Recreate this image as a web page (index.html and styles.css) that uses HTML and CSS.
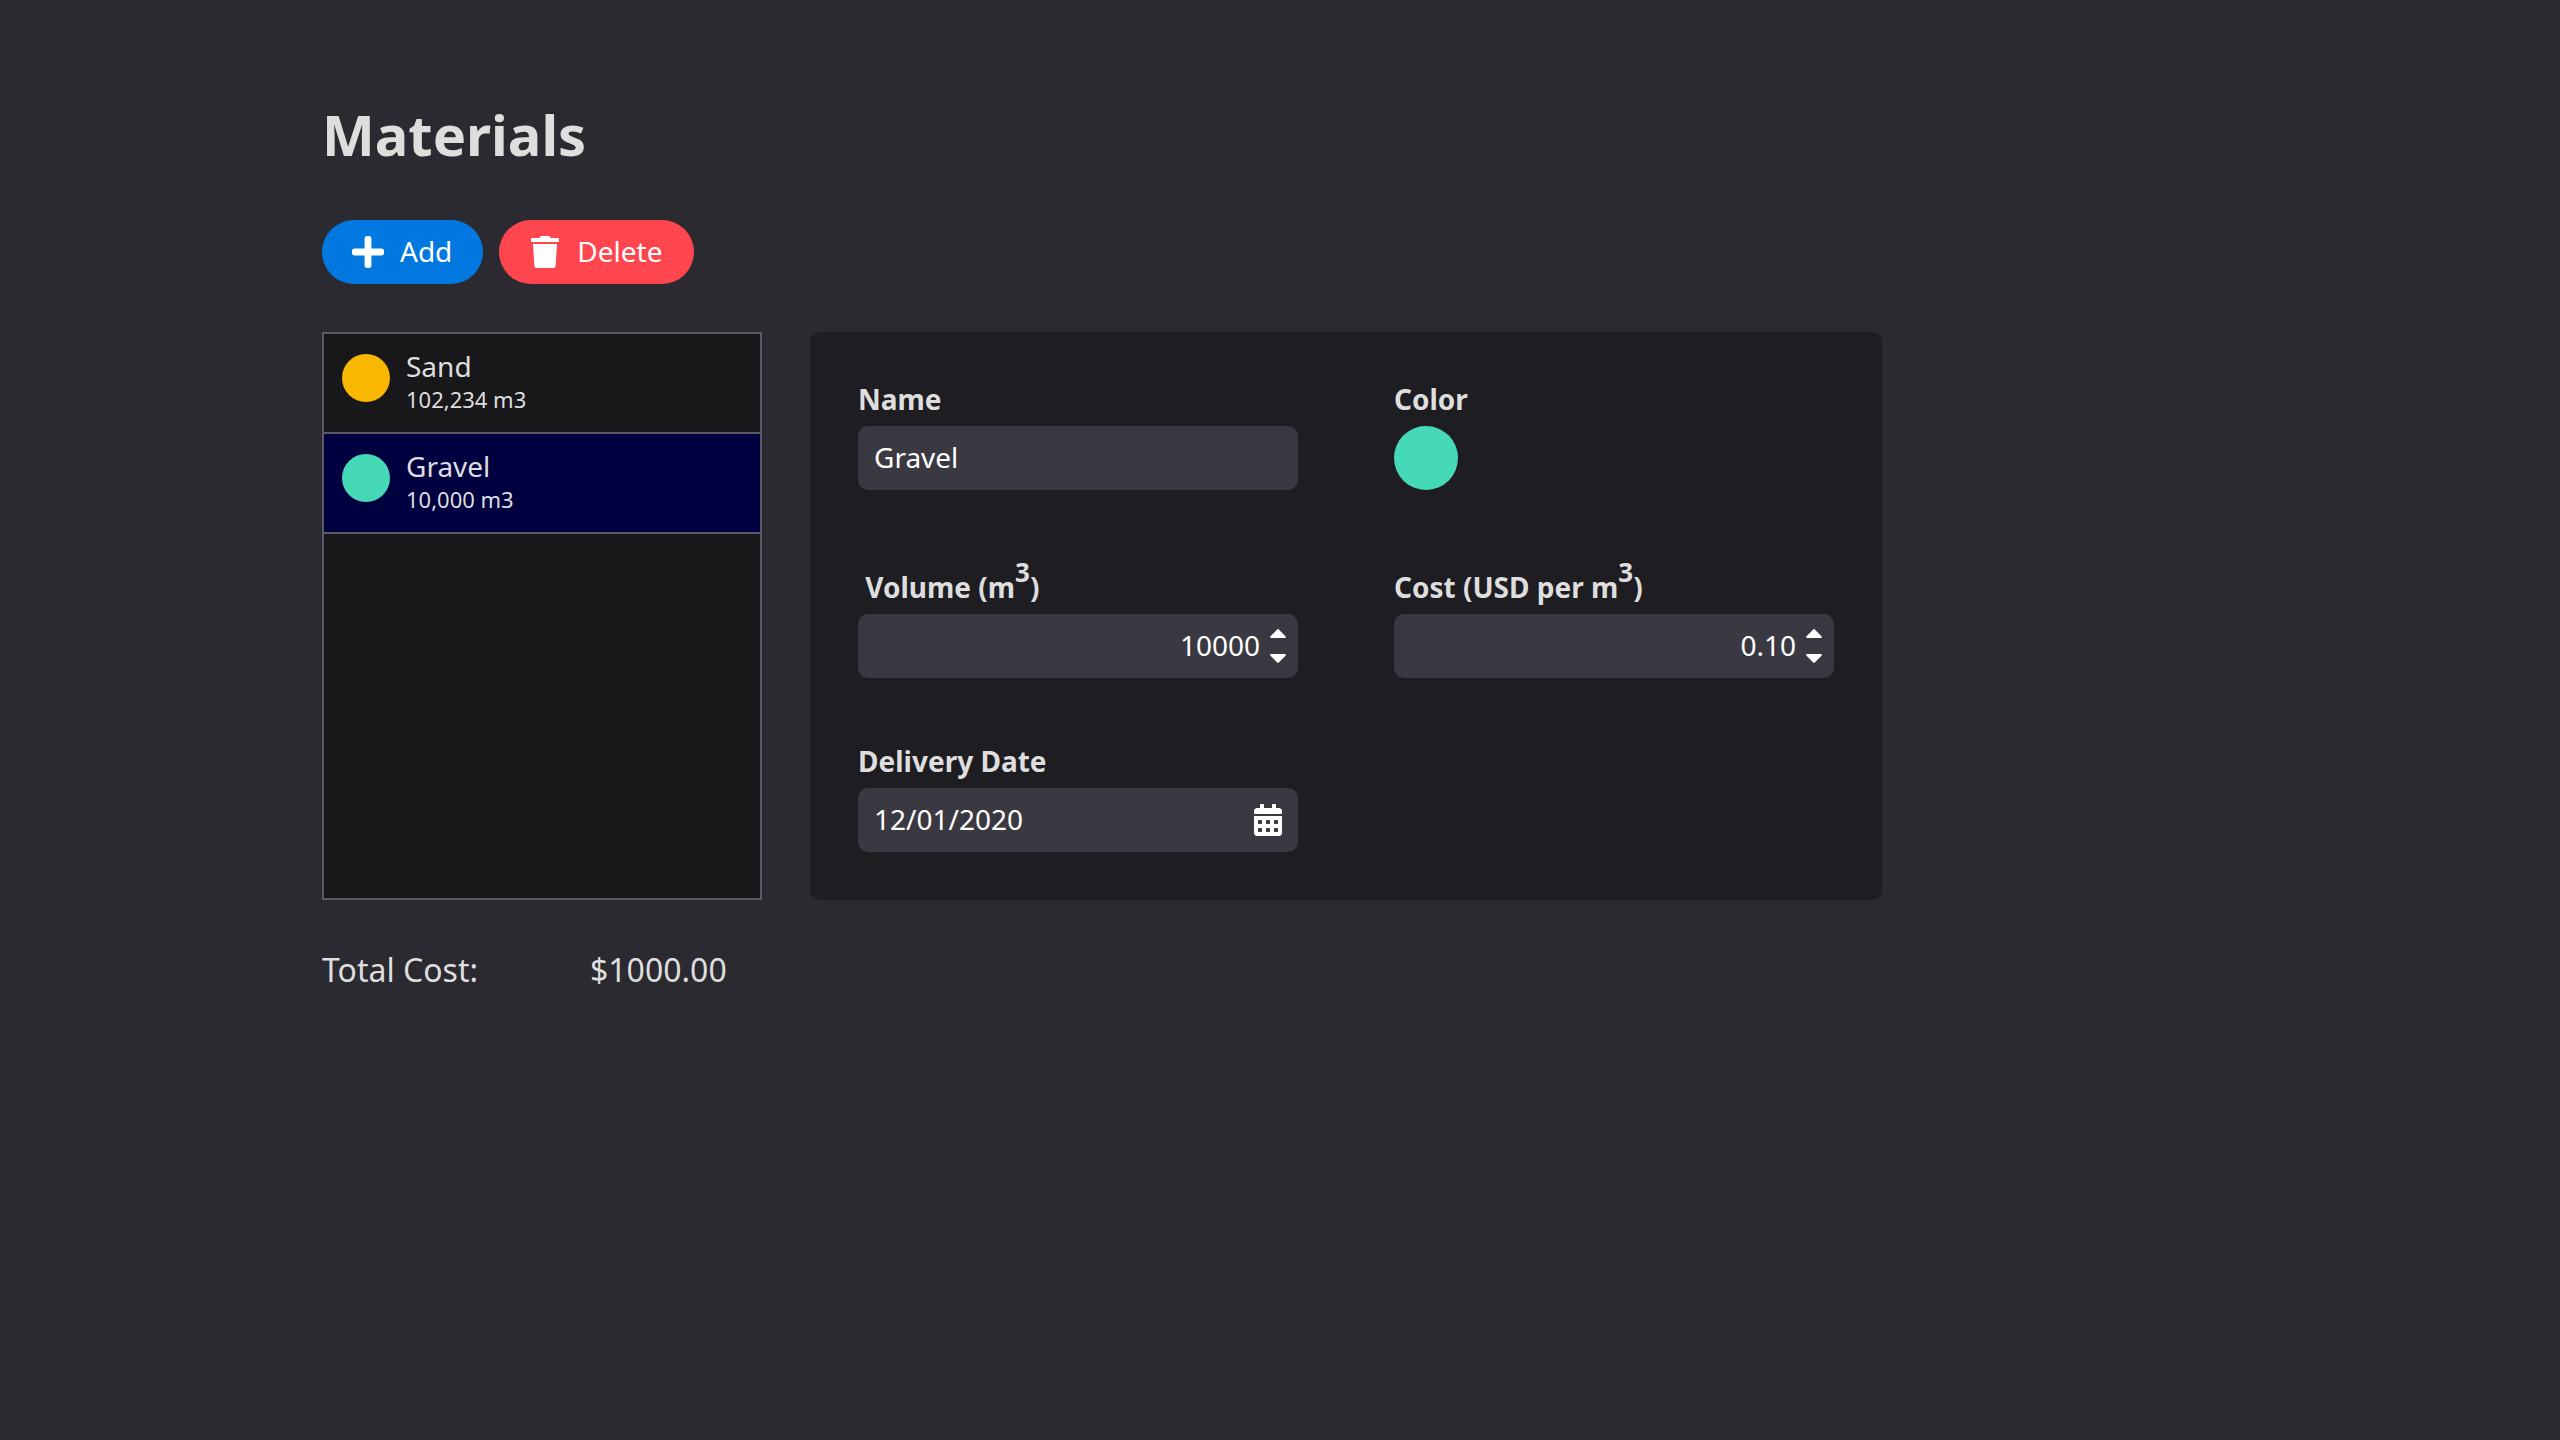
FILE: index.html
```html
<!DOCTYPE html>
<html lang="en">
<head>
<meta charset="utf-8">
<meta name="viewport" content="width=device-width, initial-scale=1">
<title>Materials</title>
<link rel="stylesheet" href="styles.css">
</head>
<body>
<main class="page">
  <h1 class="title">Materials</h1>

  <div class="toolbar">
    <button type="button" class="btn btn-add">
      <span class="btn-icon"><svg width="32" height="32" viewBox="0 32 448 448" aria-hidden="true"><path fill="currentColor" d="M416 208H272V64c0-17.67-14.33-32-32-32h-32c-17.67 0-32 14.33-32 32v144H32c-17.67 0-32 14.33-32 32v32c0 17.67 14.33 32 32 32h144v144c0 17.67 14.33 32 32 32h32c17.67 0 32-14.33 32-32V304h144c17.67 0 32-14.33 32-32v-32c0-17.67-14.33-32-32-32z"/></svg></span>
      <span class="btn-text">Add</span>
    </button>
    <button type="button" class="btn btn-delete">
      <span class="btn-icon"><svg width="28" height="32" viewBox="0 0 448 512" aria-hidden="true"><path fill="currentColor" d="M432 32H312l-9.400-18.700A24 24 0 0 0 281.100 0H166.800a23.720 23.720 0 0 0-21.400 13.300L136 32H16A16 16 0 0 0 0 48v32a16 16 0 0 0 16 16h416a16 16 0 0 0 16-16V48a16 16 0 0 0-16-16zM32 128l21.200 339a48 48 0 0 0 47.900 45h245.800a48 48 0 0 0 47.900-45L416 128z"/></svg></span>
      <span class="btn-text">Delete</span>
    </button>
  </div>

  <div class="workspace">
    <ul class="materials">
      <li class="material">
        <span class="swatch swatch-sand"></span>
        <div>
          <div class="material-name">Sand</div>
          <div class="material-volume">102,234 m3</div>
        </div>
      </li>
      <li class="material material-selected">
        <span class="swatch swatch-gravel"></span>
        <div>
          <div class="material-name">Gravel</div>
          <div class="material-volume">10,000 m3</div>
        </div>
      </li>
    </ul>

    <form class="details">
      <div class="field">
        <label class="label" for="name">Name</label>
        <div class="control"><input class="input" id="name" type="text" value="Gravel"></div>
      </div>
      <div class="field">
        <label class="label" for="color">Color</label>
        <input class="color" id="color" type="color" value="#45d9b8">
      </div>
      <div class="field">
        <label class="label" for="volume">&nbsp;Volume (m<sup>3</sup>)</label>
        <div class="control">
          <input class="input input-number" id="volume" type="number" value="10000">
          <div class="spinner">
            <button type="button" class="step" aria-label="Increase volume"><svg width="16" height="9" viewBox="0 0 16 9"><path fill="currentColor" d="M7.200.4q.8-.7 1.600 0L15.700 7.500q.6.900-.5 1.500H.8Q-.3 8.400.3 7.500z"/></svg></button>
            <button type="button" class="step" aria-label="Decrease volume"><svg width="16" height="9" viewBox="0 0 16 9"><path fill="currentColor" d="M7.200 8.600q.8.700 1.600 0L15.700 1.500q.6-.9-.5-1.500H.8Q-.3.6.3 1.500z"/></svg></button>
          </div>
        </div>
      </div>
      <div class="field">
        <label class="label" for="cost">Cost (USD per m<sup>3</sup>)</label>
        <div class="control">
          <input class="input input-number" id="cost" type="number" step="0.01" value="0.10">
          <div class="spinner">
            <button type="button" class="step" aria-label="Increase cost"><svg width="16" height="9" viewBox="0 0 16 9"><path fill="currentColor" d="M7.200.4q.8-.7 1.600 0L15.700 7.500q.6.900-.5 1.500H.8Q-.3 8.400.3 7.500z"/></svg></button>
            <button type="button" class="step" aria-label="Decrease cost"><svg width="16" height="9" viewBox="0 0 16 9"><path fill="currentColor" d="M7.200 8.600q.8.700 1.600 0L15.700 1.500q.6-.9-.5-1.500H.8Q-.3.6.3 1.500z"/></svg></button>
          </div>
        </div>
      </div>
      <div class="field">
        <label class="label" for="date">Delivery Date</label>
        <div class="control">
          <input class="input" id="date" type="text" value="12/01/2020">
          <button type="button" class="calendar" aria-label="Choose date"><svg width="28" height="32" viewBox="0 0 448 512"><path fill="currentColor" d="M0 464c0 26.500 21.500 48 48 48h352c26.500 0 48-21.500 48-48V192H0v272zm320-196c0-6.600 5.400-12 12-12h40c6.600 0 12 5.400 12 12v40c0 6.600-5.400 12-12 12h-40c-6.600 0-12-5.400-12-12v-40zm0 128c0-6.600 5.400-12 12-12h40c6.600 0 12 5.400 12 12v40c0 6.600-5.400 12-12 12h-40c-6.600 0-12-5.400-12-12v-40zM192 268c0-6.600 5.400-12 12-12h40c6.600 0 12 5.400 12 12v40c0 6.600-5.400 12-12 12h-40c-6.600 0-12-5.400-12-12v-40zm0 128c0-6.600 5.400-12 12-12h40c6.600 0 12 5.400 12 12v40c0 6.600-5.400 12-12 12h-40c-6.600 0-12-5.400-12-12v-40zM64 268c0-6.600 5.400-12 12-12h40c6.600 0 12 5.400 12 12v40c0 6.600-5.400 12-12 12H76c-6.600 0-12-5.400-12-12v-40zm0 128c0-6.600 5.400-12 12-12h40c6.600 0 12 5.400 12 12v40c0 6.600-5.400 12-12 12H76c-6.600 0-12-5.400-12-12v-40zM400 64h-48V16c0-8.800-7.200-16-16-16h-32c-8.800 0-16 7.200-16 16v48H160V16c0-8.800-7.200-16-16-16h-32c-8.800 0-16 7.200-16 16v48H48C21.500 64 0 85.500 0 112v48h448v-48c0-26.500-21.500-48-48-48z"/></svg></button>
        </div>
      </div>
    </form>
  </div>

  <dl class="total">
    <dt>Total Cost:</dt>
    <dd>$1000.00</dd>
  </dl>
</main>
</body>
</html>
```
FILE: styles.css
```css
* {
  box-sizing: border-box;
  margin: 0;
  padding: 0;
}

body {
  background: #2b2a30;
  color: #dedede;
  font: 28px/38px "Noto Sans", sans-serif;
}

button,
input {
  border: 0;
  background: none;
  color: #fff;
  font: inherit;
}

svg {
  display: block;
}

.page {
  display: flex;
  flex-direction: column;
  gap: 48px;
  max-width: 2204px;
  padding: 96px 322px;
}

.title {
  font-size: 56px;
  line-height: 76px;
}

.toolbar {
  display: flex;
  gap: 16px;
}

.btn {
  display: flex;
  align-items: center;
  gap: 14px;
  height: 64px;
  padding: 0 31px 0 28px;
  border-radius: 32px;
}

.btn-add {
  background: #0078df;
}

.btn-delete {
  background: #ff454d;
}

.btn-icon {
  display: flex;
  justify-content: center;
  width: 36px;
}

.btn-text {
  padding-bottom: 2px;
}

.workspace {
  display: grid;
  grid-template-columns: 440px minmax(0, 1fr);
  gap: 48px;
}

.materials {
  border: 2px solid #5b5968;
  background: #18181a;
  list-style: none;
}

.material {
  display: flex;
  gap: 16px;
  height: 100px;
  padding: 14px 18px;
  border-bottom: 2px solid #5b5968;
}

.material-selected {
  background: #000040;
}

.swatch {
  width: 48px;
  height: 48px;
  margin-top: 6px;
  border-radius: 50%;
}

.swatch-sand {
  background: #f9b700;
}

.swatch-gravel {
  background: #45d9b8;
}

.material-name {
  line-height: 36px;
}

.material-volume {
  font-size: 22px;
  line-height: 30px;
}

.details {
  display: grid;
  grid-template-columns: repeat(2, minmax(0, 1fr));
  gap: 64px 96px;
  padding: 48px;
  border-radius: 10px;
  background: #1e1d22;
}

.field {
  display: flex;
  flex-direction: column;
  gap: 8px;
}

.label {
  font-weight: 700;
}

.label sup {
  font-size: 26px;
  line-height: 36px;
  vertical-align: 16px;
}

.control {
  display: flex;
  align-items: center;
  height: 64px;
  border-radius: 10px;
  background: #3a3942;
}

.input {
  flex: 1;
  min-width: 0;
  height: 64px;
  padding: 0 16px 2px;
  outline: 0;
}

.input-number {
  padding-right: 10px;
  text-align: right;
  appearance: textfield;
}

.input-number::-webkit-inner-spin-button {
  appearance: none;
}

.spinner {
  display: flex;
  flex-direction: column;
  gap: 16px;
  margin-right: 12px;
}

.calendar {
  margin-right: 16px;
}

.color {
  width: 64px;
  height: 64px;
  appearance: none;
}

.color::-webkit-color-swatch-wrapper {
  padding: 0;
}

.color::-webkit-color-swatch {
  border: 0;
  border-radius: 50%;
}

.total {
  display: grid;
  grid-template-columns: 220px 1fr;
  gap: 48px;
  font-size: 32px;
  line-height: 44px;
}
```
